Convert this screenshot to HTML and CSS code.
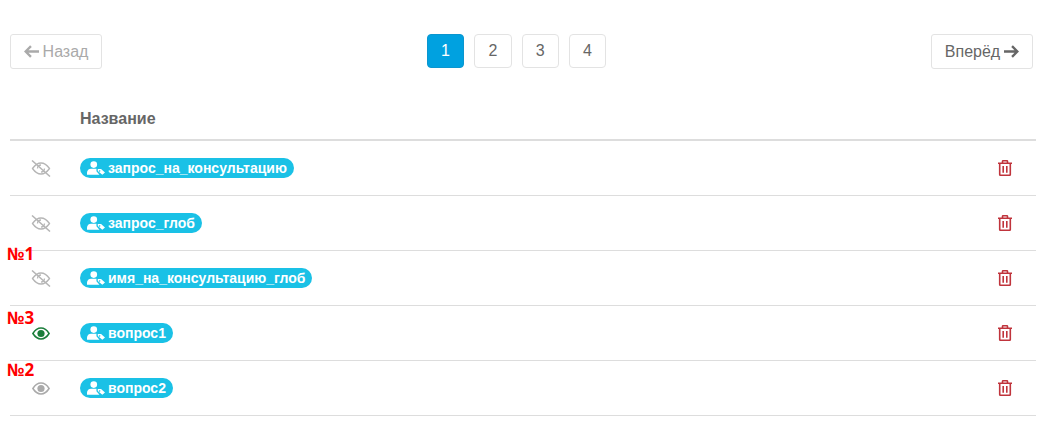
FILE: index.html
```html
<!DOCTYPE html>
<html lang="ru">
<head>
    <meta charset="UTF-8">
    <title>Вопросы</title>
    <link rel="stylesheet" href="styles.css">
</head>
<body>
<svg class="defs" width="0" height="0">
    <symbol id="eye" viewBox="0 0 20 14">
        <path d="M1 7C3.500 3 6.500 1 10 1s6.500 2 9 6c-2.500 4-5.500 6-9 6S3.500 11 1 7z" fill="none" stroke="currentColor" stroke-width="1.700"/>
        <circle cx="10" cy="7" r="4" fill="currentColor"/>
    </symbol>
    <symbol id="eye-off" viewBox="0 0 20 17">
        <path d="M1.500 8.500C4 5 6.800 3 10 3s6 2 8.500 5.500C16 12 13.200 14 10 14S4 12 1.500 8.500z" fill="none" stroke="currentColor" stroke-width="1.300"/>
        <path d="M6.500 8.500A3.500 3.500 0 0 1 10 5M13.500 8.500A3.500 3.500 0 0 1 10 12" fill="none" stroke="currentColor" stroke-width="1.300"/>
        <path d="M1 0.500L19 16.500" stroke="currentColor" stroke-width="1.500"/>
    </symbol>
    <symbol id="trash" viewBox="0 0 14 16">
        <path d="M0 3.300h14M4.500 3V1.500Q4.500 0.700 5.500 0.700h3q1 0 1 0.800V3M1.700 3.500v10.900q0 0.900 0.900 0.900h8.800q0.900 0 0.900-0.900V3.500M5.200 6v6.800M8.800 6v6.800" fill="none" stroke="currentColor" stroke-width="1.600"/>
    </symbol>
    <symbol id="user-tag" viewBox="0 0 20 15">
        <circle cx="7.500" cy="3.700" r="3.700" fill="currentColor"/>
        <path d="M0 15v-2.300C0 10 2 8.200 4.500 8.200h6v3l3.300 3.800z" fill="currentColor"/>
        <path fill-rule="evenodd" d="M12 8.600h3.600l4.400 3.900-3 2.500-5-4.200zM14 10a0.800 0.800 0 1 0 0.100 0z" fill="currentColor"/>
    </symbol>
</svg>

<div class="pager">
    <a class="nav-btn disabled">
        <svg class="arrow" viewBox="0 0 14 12"><path d="M6.500 1L1.500 6l5 5M2 6h12" fill="none" stroke="currentColor" stroke-width="2.200"/></svg>
        Назад
    </a>
    <div class="pages">
        <a class="page active">1</a>
        <a class="page">2</a>
        <a class="page">3</a>
        <a class="page">4</a>
    </div>
    <a class="nav-btn">
        Вперёд
        <svg class="arrow" viewBox="0 0 14 12"><path d="M7.500 1l5 5-5 5M12 6H0" fill="none" stroke="currentColor" stroke-width="2.200"/></svg>
    </a>
</div>

<table class="list">
    <thead>
        <tr>
            <th class="col-eye"></th>
            <th>Название</th>
            <th class="col-del"></th>
        </tr>
    </thead>
    <tbody>
        <tr>
            <td class="col-eye"><svg class="ico-off"><use href="#eye-off"/></svg></td>
            <td><span class="pill"><svg class="ico-tag"><use href="#user-tag"/></svg>запрос_на_консультацию</span></td>
            <td class="col-del"><svg class="ico-trash"><use href="#trash"/></svg></td>
        </tr>
        <tr>
            <td class="col-eye"><svg class="ico-off"><use href="#eye-off"/></svg></td>
            <td><span class="pill"><svg class="ico-tag"><use href="#user-tag"/></svg>запрос_глоб</span></td>
            <td class="col-del"><svg class="ico-trash"><use href="#trash"/></svg></td>
        </tr>
        <tr>
            <td class="col-eye"><svg class="ico-off"><use href="#eye-off"/></svg></td>
            <td><span class="pill"><svg class="ico-tag"><use href="#user-tag"/></svg>имя_на_консультацию_глоб</span></td>
            <td class="col-del"><svg class="ico-trash"><use href="#trash"/></svg></td>
        </tr>
        <tr>
            <td class="col-eye"><svg class="ico-eye green"><use href="#eye"/></svg></td>
            <td><span class="pill"><svg class="ico-tag"><use href="#user-tag"/></svg>вопрос1</span></td>
            <td class="col-del"><svg class="ico-trash"><use href="#trash"/></svg></td>
        </tr>
        <tr>
            <td class="col-eye"><svg class="ico-eye"><use href="#eye"/></svg></td>
            <td><span class="pill"><svg class="ico-tag"><use href="#user-tag"/></svg>вопрос2</span></td>
            <td class="col-del"><svg class="ico-trash"><use href="#trash"/></svg></td>
        </tr>
    </tbody>
</table>

<span class="mark mark-1">№1</span>
<span class="mark mark-3">№3</span>
<span class="mark mark-2">№2</span>
</body>
</html>
```

FILE: styles.css
```css
body {
    margin: 0;
    padding: 34px 14px 0 10px;
    font-family: "Liberation Sans", Arial, sans-serif;
    background-color: #fff;
    color: #666;
}
.defs {
    position: absolute;
}
.pager {
    display: flex;
    justify-content: space-between;
    align-items: flex-start;
    margin-right: 3px;
}
.nav-btn {
    display: flex;
    align-items: center;
    justify-content: center;
    gap: 4px;
    width: 102px;
    height: 35px;
    box-sizing: border-box;
    border: 1px solid #e3e3e3;
    border-radius: 3px;
    font-size: 16px;
    color: #666;
}
.nav-btn.disabled {
    width: 92px;
    color: #aaa;
}
.arrow {
    width: 15px;
    height: 13px;
}
.pages {
    display: flex;
    gap: 10px;
}
.page {
    display: flex;
    align-items: center;
    justify-content: center;
    width: 37.300px;
    height: 34px;
    box-sizing: border-box;
    border: 1px solid #e3e3e3;
    border-radius: 4px;
    font-size: 16px;
    color: #666;
}
.page.active {
    background-color: #00a1e0;
    border-color: #0b96cf;
    color: #fff;
}
.list {
    width: 100%;
    margin-top: 30px;
    border-collapse: collapse;
}
.list th {
    height: 40px;
    padding: 0;
    text-align: left;
    font-size: 16px;
    font-weight: 700;
    color: #666;
    border-bottom: 2px solid #ddd;
}
.list td {
    height: 54px;
    padding: 0;
    border-bottom: 1px solid #ddd;
}
.col-eye {
    width: 70px;
    padding-right: 0;
}
td.col-eye {
    padding-left: 21px;
    width: 49px;
    box-sizing: border-box;
}
.col-del {
    width: 60px;
}
td.col-del {
    padding-left: 22px;
    box-sizing: border-box;
}
.list svg {
    display: block;
}
.ico-off {
    width: 20px;
    height: 17px;
    color: #b5b5b5;
}
.ico-eye {
    width: 18px;
    height: 13px;
    margin-left: 1px;
    color: #aaa;
}
.ico-eye.green {
    color: #1a7d3a;
}
.ico-trash {
    width: 14px;
    height: 16px;
    color: #c0343c;
}
.pill {
    display: inline-flex;
    align-items: center;
    gap: 3px;
    height: 20px;
    padding: 0 7px;
    border-radius: 10px;
    background-color: #1ac1e6;
    color: #fff;
    font-size: 14px;
    font-weight: 700;
    vertical-align: middle;
}
.list .ico-tag {
    width: 18px;
    height: 14px;
}
.mark {
    position: absolute;
    left: 7px;
    color: #f00;
    font-family: "Noto Sans", sans-serif;
    font-size: 17px;
    font-weight: 700;
    line-height: 18px;
}
.mark-1 {
    top: 245px;
}
.mark-3 {
    top: 309px;
}
.mark-2 {
    top: 361px;
}
```
